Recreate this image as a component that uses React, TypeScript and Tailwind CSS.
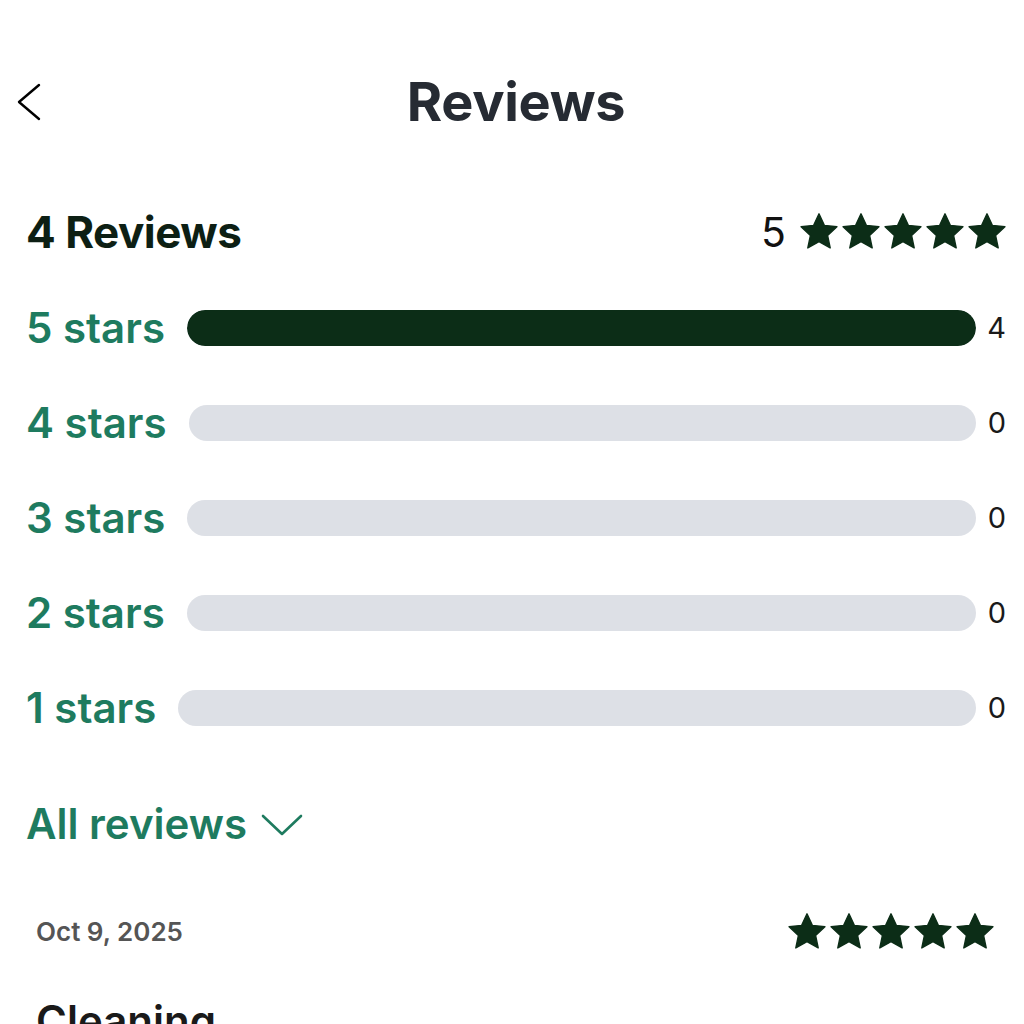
const BREAKDOWN = [
  { label: '5 stars', count: 4 },
  { label: '4 stars', count: 0 },
  { label: '3 stars', count: 0 },
  { label: '2 stars', count: 0 },
  { label: '1 stars', count: 0 },
];

const TOTAL = 4;

function Star({ className }: { className?: string }) {
  return (
    <svg viewBox="0 0 24 24" className={className} fill="currentColor">
      <path
        d="M12 1.6l3.05 6.6 7.2.8-5.35 4.95 1.5 7.15L12 17.5l-6.4 3.6 1.5-7.15L1.75 9l7.2-.8z"
        strokeLinejoin="round"
        stroke="currentColor"
        strokeWidth="0.8"
      />
    </svg>
  );
}

function StarRow({ size }: { size: string }) {
  return (
    <div className="flex items-center text-[#0c2d17]">
      {[0, 1, 2, 3, 4].map((i) => (
        <Star key={i} className={size} />
      ))}
    </div>
  );
}

export default function App() {
  return (
    <div className="w-[1024px] h-[1024px] bg-white font-['Inter',sans-serif] overflow-hidden">
      {/* Header */}
      <div className="flex items-center pt-[72px] pl-[16px] pr-[8px]">
        <button className="w-[28px] h-[60px] flex items-center text-black">
          <svg viewBox="0 0 26 38" className="w-[26px] h-[38px]" fill="none" stroke="currentColor" strokeWidth="2.4" strokeLinecap="round" strokeLinejoin="round">
            <polyline points="23,2 3,19 23,36" />
          </svg>
        </button>
        <h1 className="flex-1 text-center text-[54px] leading-[60px] font-bold text-[#262b33] tracking-[-0.3px]">
          Reviews
        </h1>
        <div className="w-[28px]" />
      </div>

      {/* Summary */}
      <div className="flex items-center justify-between pl-[26px] pr-[16px] mt-[76px]">
        <h2 className="text-[44px] leading-[48px] font-bold text-[#0d1f14] tracking-[-0.5px]">4 Reviews</h2>
        <div className="flex items-center gap-[12px]">
          <span className="text-[41px] leading-[48px] text-[#111]">5</span>
          <StarRow size="w-[42px] h-[42px]" />
        </div>
      </div>

      {/* Breakdown */}
      <div className="flex flex-col gap-[59px] pl-[26px] pr-[18px] mt-[54px]">
        {BREAKDOWN.map((row) => (
          <div key={row.label} className="flex items-center h-[36px]">
            <span className="text-[42px] leading-[36px] font-semibold text-[#1e7b5f] whitespace-nowrap mr-[22px]">
              {row.label}
            </span>
            <div className="flex-1 h-[36px] rounded-full bg-[#dde0e6] overflow-hidden">
              <div
                className="h-full rounded-full bg-[#0c2d17]"
                style={{ width: `${(row.count / TOTAL) * 100}%` }}
              />
            </div>
            <span className="w-[30px] text-right text-[29px] leading-[36px] text-[#1a1a1a]">{row.count}</span>
          </div>
        ))}
      </div>

      {/* All reviews dropdown */}
      <button className="flex items-center gap-[14px] pl-[26px] mt-[74px] text-[#1e7b5f]">
        <span className="text-[42px] leading-[48px] font-semibold">All reviews</span>
        <svg viewBox="0 0 42 22" className="w-[42px] h-[22px] mt-[2px]" fill="none" stroke="currentColor" strokeWidth="2.6" strokeLinecap="round" strokeLinejoin="round">
          <polyline points="2,2 21,20 40,2" />
        </svg>
      </button>

      {/* Review item */}
      <div className="pl-[36px] pr-[28px] mt-[63px]">
        <div className="flex items-center justify-between">
          <span className="text-[26px] leading-[36px] font-semibold text-[#555]">Oct 9, 2025</span>
          <StarRow size="w-[42px] h-[42px]" />
        </div>
        <h3 className="mt-[44px] text-[42px] leading-[48px] font-semibold text-[#1a1a1a]">Cleaning</h3>
      </div>
    </div>
  );
}
